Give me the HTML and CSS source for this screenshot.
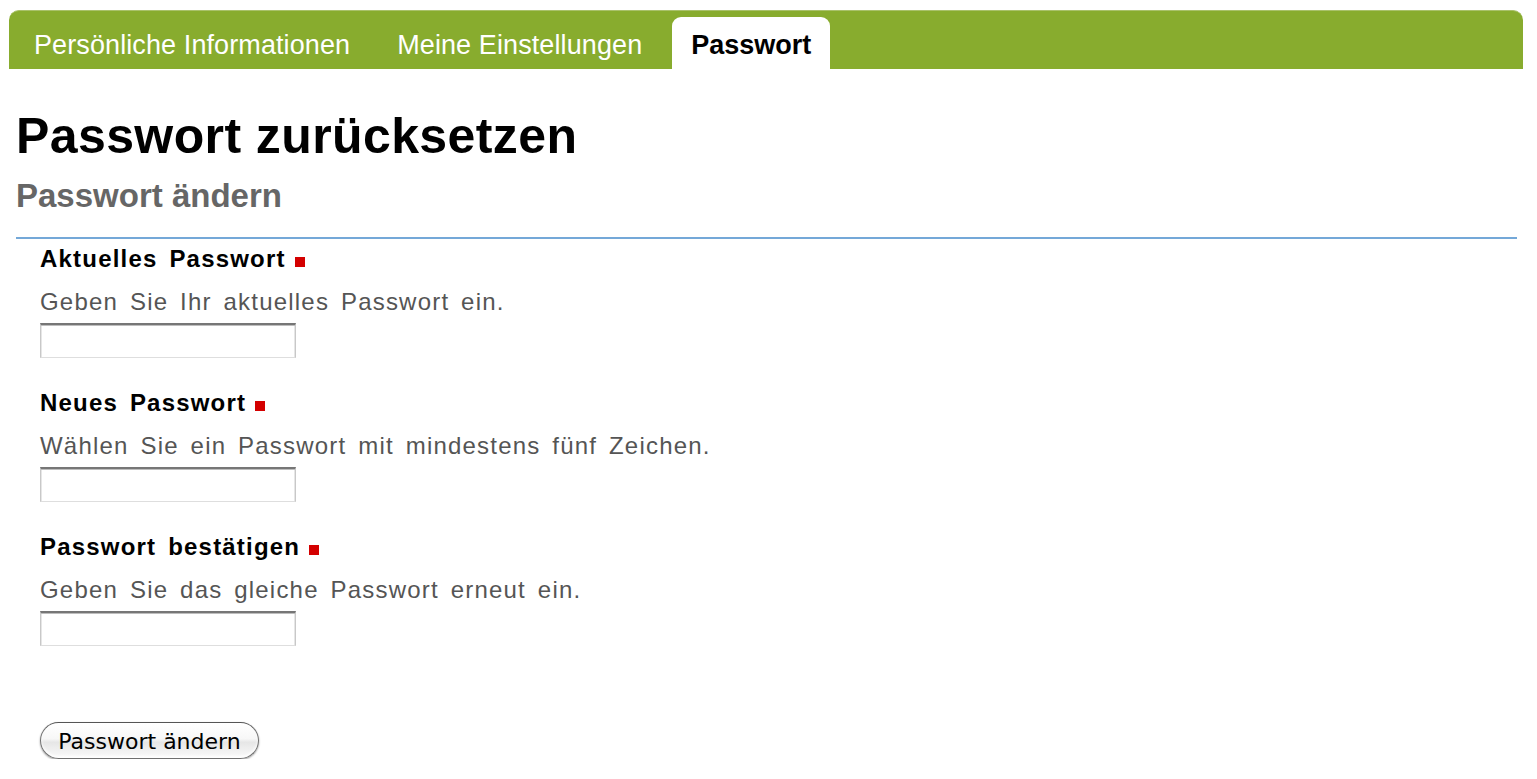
FILE: index.html
```html
<!DOCTYPE html>
<html lang="de">
<head>
<meta charset="utf-8">
<title>Passwort zurücksetzen</title>
<link rel="stylesheet" href="styles.css">
</head>
<body>
<nav class="tabs">
  <a class="tab">Persönliche Informationen</a>
  <a class="tab">Meine Einstellungen</a>
  <a class="tab active">Passwort</a>
</nav>
<main class="content">
  <h1 class="title">Passwort zurücksetzen</h1>
  <h2 class="subtitle">Passwort ändern</h2>
  <form class="form">
    <div class="field">
      <label class="label">Aktuelles Passwort <span class="req"></span></label>
      <div class="help">Geben Sie Ihr aktuelles Passwort ein.</div>
      <input class="input" type="password">
    </div>
    <div class="field">
      <label class="label">Neues Passwort <span class="req"></span></label>
      <div class="help">Wählen Sie ein Passwort mit mindestens fünf Zeichen.</div>
      <input class="input" type="password">
    </div>
    <div class="field">
      <label class="label">Passwort bestätigen <span class="req"></span></label>
      <div class="help">Geben Sie das gleiche Passwort erneut ein.</div>
      <input class="input" type="password">
    </div>
    <div class="actions">
      <button class="button" type="button">Passwort ändern</button>
    </div>
  </form>
</main>
</body>
</html>
```
FILE: styles.css
```css
html, body {
  margin: 0;
  padding: 0;
  background: #fff;
}
body {
  padding: 10px 14px 0 9px;
  font-family: "Liberation Sans", Arial, sans-serif;
  color: #000;
}
.tabs {
  display: flex;
  align-items: flex-end;
  height: 59px;
  background: #88ac2e;
  border-radius: 10px 10px 0 0;
  border-top: 1px solid #a9c16a;
  padding: 0 0 0 6px;
  box-sizing: border-box;
}
.tab {
  display: block;
  height: 52px;
  box-sizing: border-box;
  padding: 13px 19px 0 19px;
  margin-right: 9px;
  font-size: 27px;
  line-height: 30px;
  letter-spacing: 0.1px;
  color: #fff;
  border-radius: 9px 9px 0 0;
  white-space: nowrap;
}
.tab.active {
  margin-left: 2px;
  background: #fff;
  color: #000;
  font-weight: bold;
  letter-spacing: 0;
}
.content {
  padding: 0 6px 0 7px;
}
.title {
  margin: 39px 0 0 0;
  font-size: 50px;
  line-height: 56px;
  letter-spacing: 0.4px;
  font-weight: bold;
}
.subtitle {
  margin: 13px 0 0 0;
  font-size: 33px;
  line-height: 38px;
  color: #666;
  font-weight: bold;
  padding-bottom: 22px;
  border-bottom: 2px solid #74a8d8;
}
.form {
  padding: 6px 0 0 24px;
}
.field {
  height: 144px;
}
.label {
  display: block;
  font-size: 24px;
  line-height: 28px;
  letter-spacing: 1.2px;
  word-spacing: 4px;
  font-weight: bold;
}
.req {
  display: inline-block;
  width: 10px;
  height: 10px;
  background: #d40000;
  margin-left: -3px;
  vertical-align: baseline;
}
.help {
  margin-top: 14px;
  font-size: 24px;
  line-height: 30px;
  color: #555;
  letter-spacing: 1.2px;
  word-spacing: 4px;
}
.input {
  display: block;
  margin-top: 6px;
  width: 256px;
  height: 35px;
  box-sizing: border-box;
  border: 1px solid #c8c8c8;
  border-top: 2px solid #767676;
  border-bottom-color: #dedede;
  box-shadow: inset 0 1px 0 #bdbdbd, inset 1px 0 0 #e6e6e6, inset -1px 0 0 #e6e6e6;
  background: #fff;
  padding: 0;
}
.actions {
  padding-top: 45px;
}
.button {
  width: 219px;
  height: 37px;
  border-radius: 19px;
  border: 1px solid #6f6f6f;
  border-top-color: #555;
  background: linear-gradient(#ffffff, #f7f7f7 45%, #e6e6e6 55%, #fafafa);
  box-shadow: 0 1px 2px rgba(0,0,0,0.4), inset 0 -2px 3px rgba(255,255,255,0.9);
  font-family: "DejaVu Sans", sans-serif;
  font-size: 22px;
  line-height: 24px;
  color: #000;
  padding: 2px 0 0 0;
}
```
